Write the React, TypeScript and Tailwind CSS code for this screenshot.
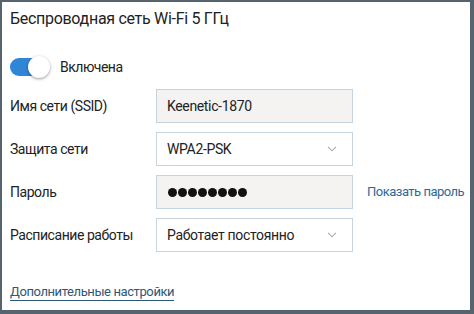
import React from "react";

const Chevron = () => (
  <svg width="10" height="6" viewBox="0 0 10 6" className="absolute right-[15px] top-1/2 -translate-y-1/2">
    <path d="M1 0.8 L5 4.8 L9 0.8" fill="none" stroke="#a3adb6" strokeWidth="1.1" />
  </svg>
);

export default function App() {
  const dots = Array.from({ length: 8 });
  const label = "w-[146px] shrink-0 text-[14px] tracking-[-0.45px] whitespace-nowrap";
  const box = "w-[197px] h-[34px] shrink-0 border border-[#c6d4e0] flex items-center pl-[10px] text-[14px] tracking-[-0.35px]";
  return (
    <div
      className="w-[474px] h-[314px] overflow-hidden bg-white border-l-2 border-t-2 border-r-4 border-b-4 border-[#55646f] pl-2 text-[#222]"
      style={{ fontFamily: "Roboto, 'Noto Sans', sans-serif" }}
    >
      <div className="h-[34px] flex items-center text-[16px] tracking-[-0.3px]">Беспроводная сеть Wi-Fi 5 ГГц</div>
      <div className="mt-[20px] h-[22px] flex items-center">
        <div className="relative w-[38px] h-[18px] rounded-full bg-[#2f86d6]">
          <div className="absolute right-[-2px] top-1/2 -translate-y-1/2 w-[22px] h-[22px] rounded-full bg-white shadow-[0_1px_3px_rgba(0,0,0,0.4)]" />
        </div>
        <span className="ml-[12px] text-[14px] tracking-[-0.5px]">Включена</span>
      </div>
      <div className="mt-[11px] flex flex-col gap-[9px]">
        <div className="flex items-center h-[34px]">
          <div className={label}>Имя сети (SSID)</div>
          <div className={`${box} bg-[#f4f3f2]`}>Keenetic-1870</div>
        </div>
        <div className="flex items-center h-[34px]">
          <div className={label}>Защита сети</div>
          <div className={`${box} relative bg-white`}>
            WPA2-PSK
            <Chevron />
          </div>
        </div>
        <div className="flex items-center h-[34px]">
          <div className={label}>Пароль</div>
          <div className="w-[197px] h-[34px] shrink-0 border border-[#c6d4e0] bg-[#f4f3f2] flex items-center pl-[11px] gap-[1px]">
            {dots.map((_, i) => (
              <div key={i} className="w-[9px] h-[9px] rounded-full bg-[#111]" />
            ))}
          </div>
          <span className="ml-[14px] text-[13px] tracking-[-0.5px] whitespace-nowrap text-[#2d6a98]">Показать пароль</span>
        </div>
        <div className="flex items-center h-[34px]">
          <div className={label}>Расписание работы</div>
          <div className={`${box} relative bg-white`}>
            Работает постоянно
            <Chevron />
          </div>
        </div>
      </div>
      <div className="mt-[30px] h-[20px] flex items-center">
        <span className="text-[13px] tracking-[-0.4px] text-[#2f5778] border-b border-[#2f5778] leading-[17px]">Дополнительные настройки</span>
      </div>
    </div>
  );
}
